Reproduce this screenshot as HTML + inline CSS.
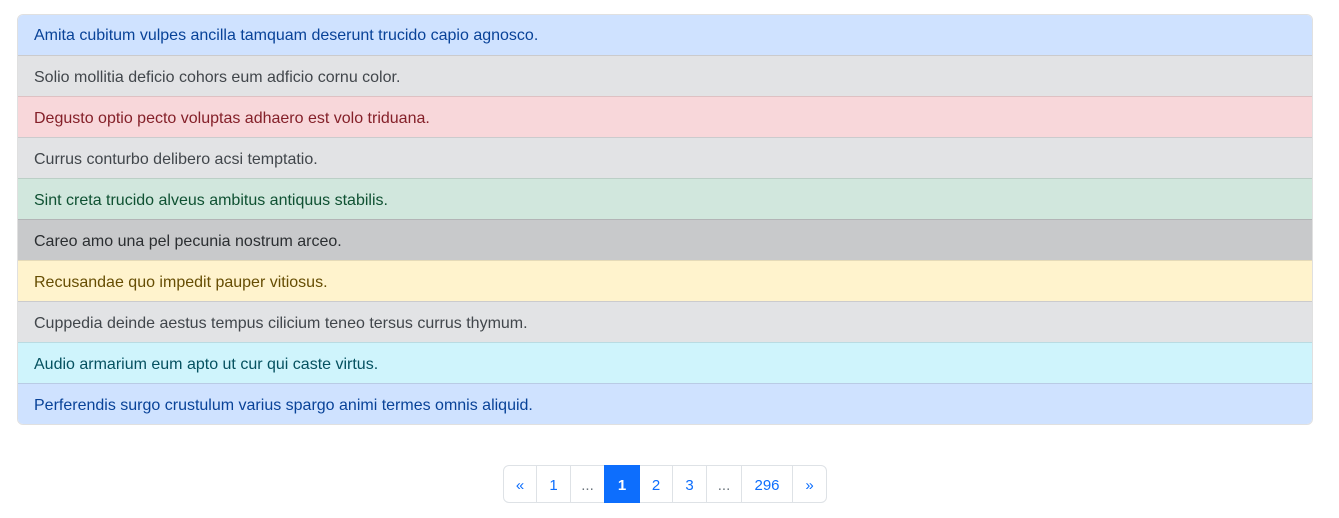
<!DOCTYPE html>
<html><head><meta charset="utf-8">
<style>
*{box-sizing:border-box}
body{margin:0;background:#fff;font-family:"Liberation Sans",sans-serif;font-size:16px;width:1339px;height:518px;overflow:hidden}
.list{position:absolute;left:17px;top:14px;width:1296px;border:1px solid rgba(0,0,0,.12);border-radius:6px;overflow:hidden}
.it{height:41px;line-height:43px;padding:0 16px;border-top:1px solid rgba(0,0,0,.1)}
.it:first-child{border-top:none;height:40px;line-height:42px}
.p{background:#cfe2ff;color:#084298}
.s{background:#e2e3e5;color:#41464b}
.d{background:#f8d7da;color:#842029}
.g{background:#d1e7dd;color:#0f5132}
.k{background:#c8c9cb;color:#2b2e31}
.w{background:#fff3cd;color:#664d03}
.i{background:#cff4fc;color:#055160}
.pg{position:absolute;left:503px;top:465px;display:flex;height:38px}
.pg span{display:block;height:38px;line-height:40px;text-align:center;border:1px solid #dee2e6;margin-left:-1px;color:#0d6efd;font-size:15px}
.pg span:first-child{margin-left:0;border-radius:6px 0 0 6px}
.pg span:last-child{border-radius:0 6px 6px 0}
.pg .a{background:#0d6efd;border-color:#0d6efd;color:#fff;font-weight:bold;position:relative}
.pg .e{color:#6c757d}
</style></head><body>
<div class="list">
<div class="it p">Amita cubitum vulpes ancilla tamquam deserunt trucido capio agnosco.</div>
<div class="it s">Solio mollitia deficio cohors eum adficio cornu color.</div>
<div class="it d">Degusto optio pecto voluptas adhaero est volo triduana.</div>
<div class="it s">Currus conturbo delibero acsi temptatio.</div>
<div class="it g">Sint creta trucido alveus ambitus antiquus stabilis.</div>
<div class="it k">Careo amo una pel pecunia nostrum arceo.</div>
<div class="it w">Recusandae quo impedit pauper vitiosus.</div>
<div class="it s">Cuppedia deinde aestus tempus cilicium teneo tersus currus thymum.</div>
<div class="it i">Audio armarium eum apto ut cur qui caste virtus.</div>
<div class="it p">Perferendis surgo crustulum varius spargo animi termes omnis aliquid.</div>
</div>
<div class="pg">
<span style="width:34px">«</span>
<span style="width:35px">1</span>
<span style="width:35px" class="e">...</span>
<span style="width:36px" class="a">1</span>
<span style="width:34px">2</span>
<span style="width:35px">3</span>
<span style="width:36px" class="e">...</span>
<span style="width:52px">296</span>
<span style="width:35px">»</span>
</div>
</body></html>
